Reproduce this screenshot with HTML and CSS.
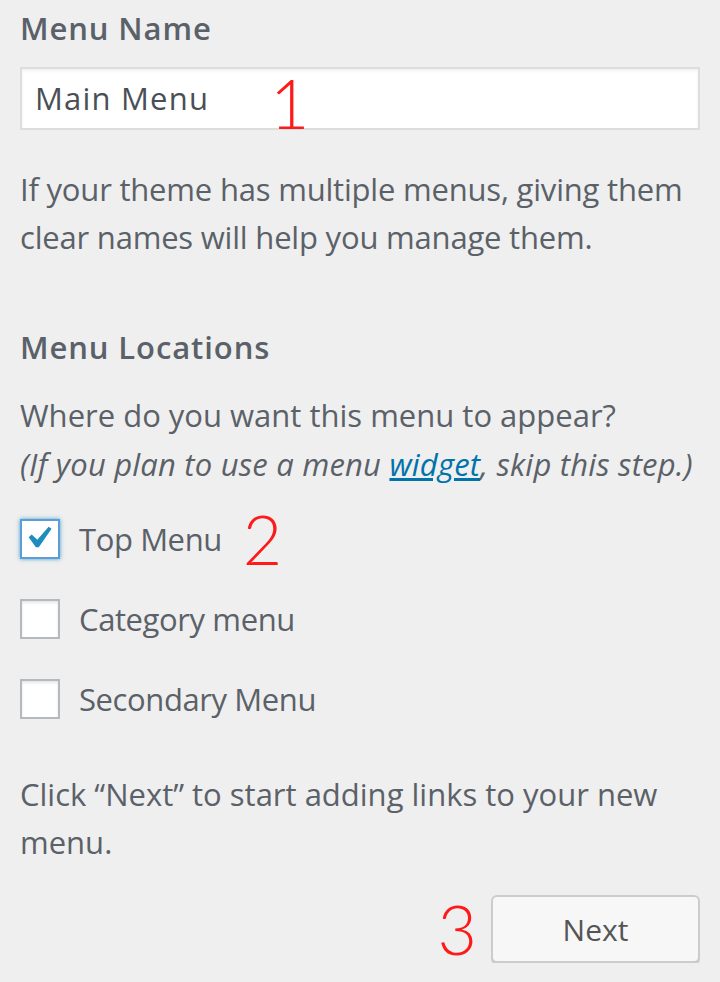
FILE: index.html
```html
<!DOCTYPE html>
<html lang="en">
<head>
<meta charset="utf-8">
<title>Menu settings</title>
<link rel="stylesheet" href="styles.css">
</head>
<body>
<div class="panel">
  <h3 class="heading heading-name">Menu Name</h3>
  <div class="field">
    <div class="input">Main Menu</div>
    <span class="mark mark-1">1</span>
  </div>
  <p class="desc desc-name">If your theme has multiple menus, giving them clear names will help you manage them.</p>

  <h3 class="heading heading-loc">Menu Locations</h3>
  <p class="desc desc-loc">Where do you want this menu to appear?<br><em>(If you plan to use a menu <a href="#" class="link">widget</a>, skip this step.)</em></p>

  <ul class="locations">
    <li class="loc">
      <span class="box box-checked">
        <svg class="check" viewBox="0 0 20 20" width="44" height="44"><path d="M14.83 4.89l1.34.94-5.81 8.38H9.02L5.78 9.67l1.34-1.25 2.57 2.4z" fill="#1e8cbe"/></svg>
      </span>
      <span class="loc-label">Top Menu</span>
      <span class="mark mark-2">2</span>
    </li>
    <li class="loc">
      <span class="box"></span>
      <span class="loc-label">Category menu</span>
    </li>
    <li class="loc">
      <span class="box"></span>
      <span class="loc-label">Secondary Menu</span>
    </li>
  </ul>

  <p class="desc desc-next">Click “Next” to start adding links to your new menu.</p>

  <div class="actions">
    <span class="mark mark-3">3</span>
    <button class="button">Next</button>
  </div>
</div>
</body>
</html>
```
FILE: styles.css
```css
html, body {
  margin: 0;
  padding: 0;
  background: #efefef;
}
body {
  font-family: "Open Sans", "Noto Sans", sans-serif;
  color: #5b6168;
}
.panel {
  padding: 0 20px 0 20px;
  width: 680px;
}
.heading {
  margin: 0;
  font-size: 31px;
  font-weight: 600;
  color: #5b6168;
  line-height: 40px;
  letter-spacing: 0.9px;
}
.heading-name {
  margin-top: 8px;
}
.field {
  position: relative;
  margin-top: 19px;
}
.input {
  box-sizing: border-box;
  height: 63px;
  width: 680px;
  background: #fff;
  border: 2px solid #dddddd;
  box-shadow: inset 0 2px 3px rgba(0,0,0,0.06);
  padding: 0 13px;
  font-size: 31px;
  line-height: 59px;
  color: #4a4f55;
  letter-spacing: 1.2px;
}
.mark {
  font-family: "Lato", "DejaVu Sans", sans-serif;
  font-weight: 300;
  color: #ff1a1a;
  font-size: 68px;
  line-height: 1;
}
.mark-1 {
  position: absolute;
  left: 250px;
  top: 2px;
}
.desc {
  margin: 0;
  font-size: 31px;
  line-height: 48px;
  letter-spacing: 0;
  color: #5b6168;
}
.desc-name {
  margin-top: 35px;
  width: 680px;
  letter-spacing: -0.2px;
}
.heading-loc {
  margin-top: 66px;
}
.desc-loc {
  margin-top: 24px;
  line-height: 49px;
}
.desc-loc em {
  letter-spacing: 0.2px;
}
.link {
  color: #0073aa;
  text-decoration: underline;
}
.locations {
  list-style: none;
  margin: 30px 0 0 0;
  padding: 0;
  display: flex;
  flex-direction: column;
  gap: 40px;
}
.loc {
  display: flex;
  align-items: center;
  height: 40px;
}
.box {
  box-sizing: border-box;
  width: 40px;
  height: 40px;
  background: #fff;
  border: 2px solid #b4b9be;
  box-shadow: inset 0 2px 3px rgba(0,0,0,0.1);
  display: flex;
  align-items: center;
  justify-content: center;
  flex: none;
  overflow: visible;
}
.box-checked {
  border-color: #5b9dd9;
  box-shadow: 0 0 4px rgba(30,140,190,0.8);
}
.check {
  flex: none;
  margin: -2px 0 0 -4px;
}
.loc-label {
  margin-left: 19px;
  font-size: 31px;
  letter-spacing: -0.4px;
  color: #5b6168;
}
.mark-2 {
  margin-left: 21px;
}
.desc-next {
  margin-top: 51px;
}
.actions {
  display: flex;
  justify-content: flex-end;
  align-items: center;
  margin-top: 29px;
  gap: 14px;
}
.button {
  box-sizing: border-box;
  width: 209px;
  height: 68px;
  background: #f7f7f7;
  border: 2px solid #cccccc;
  border-radius: 6px;
  box-shadow: 0 2px 0 #cccccc;
  font-family: "Open Sans", "Noto Sans", sans-serif;
  font-size: 30px;
  color: #555555;
  letter-spacing: 0;
  padding: 0;
}
```
